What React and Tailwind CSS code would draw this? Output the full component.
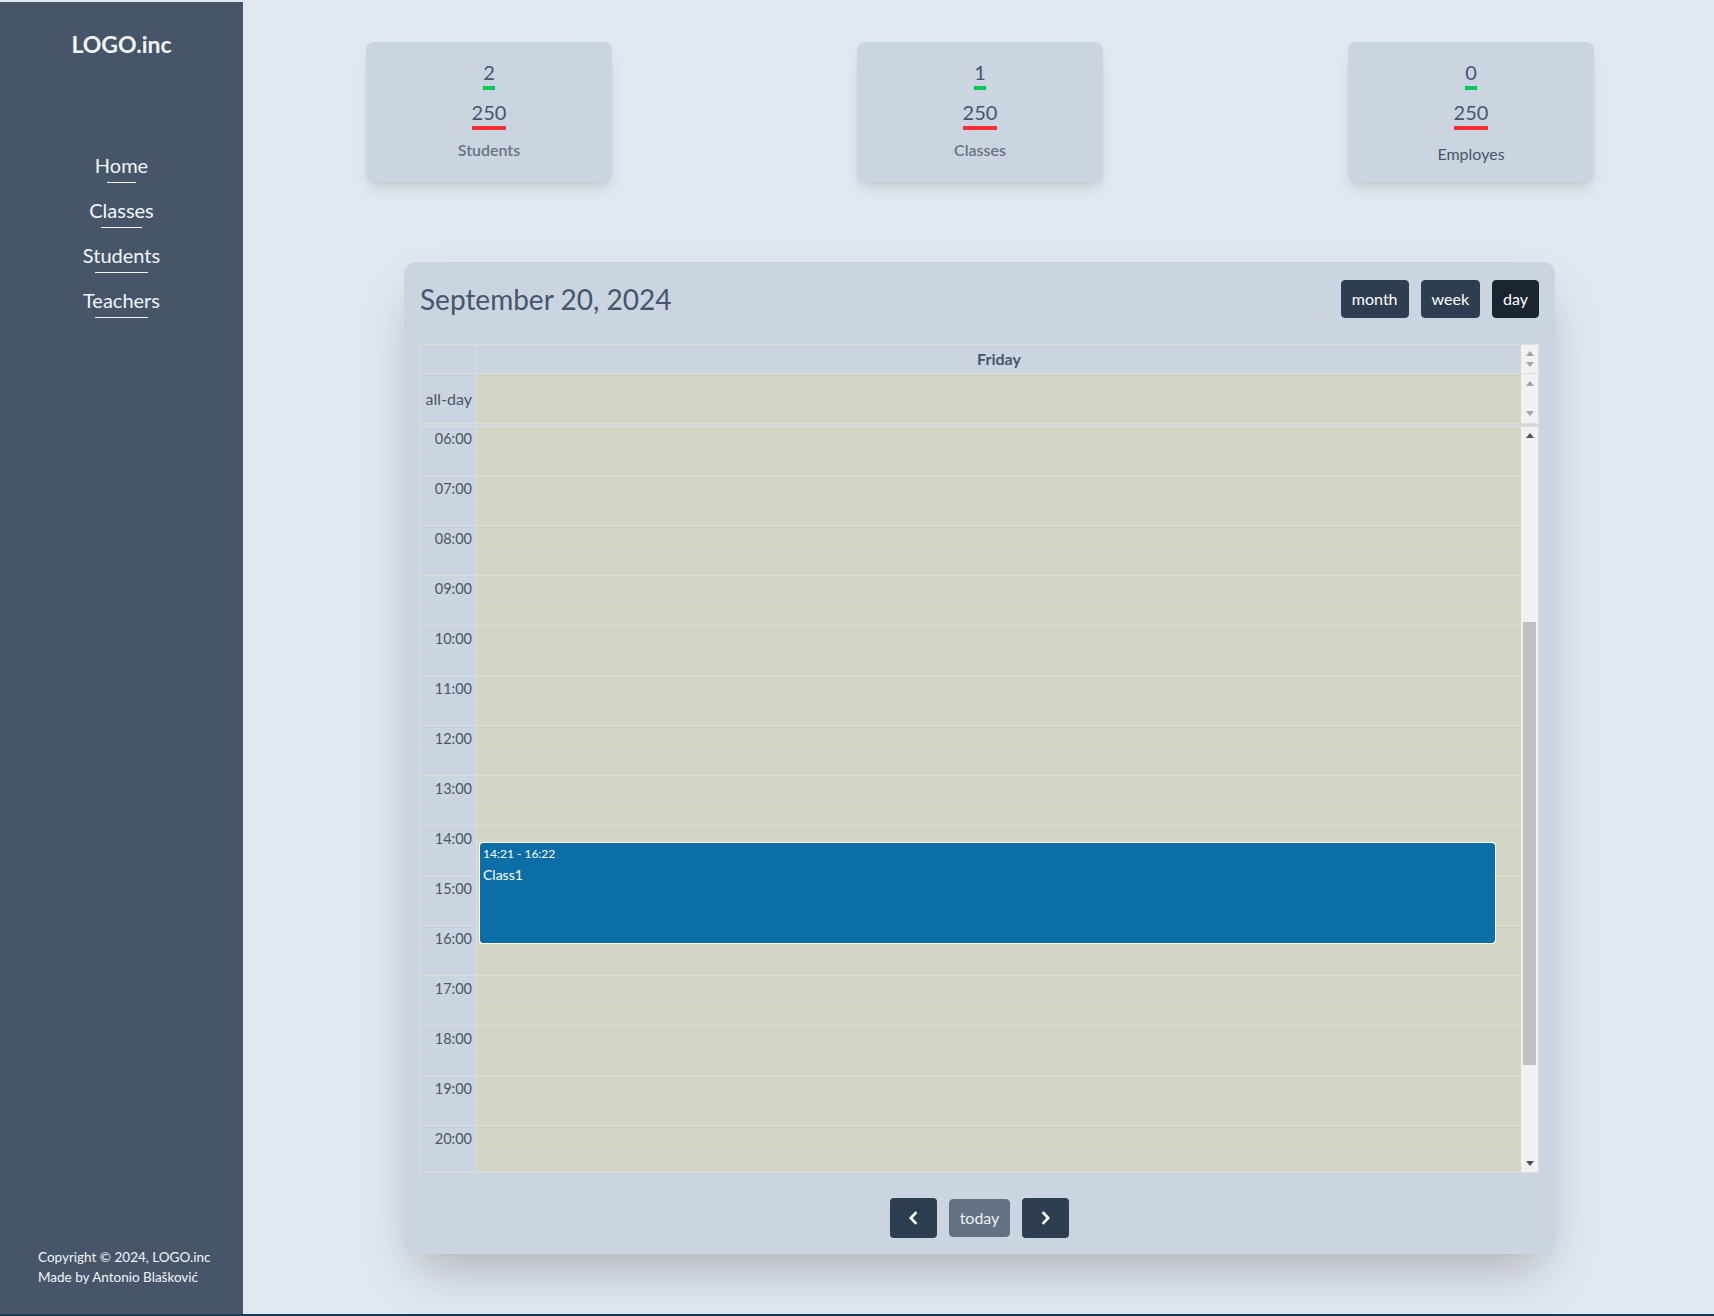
import React from 'react';

const navLinks = ['Home', 'Classes', 'Students', 'Teachers'];

const stats = [
    { value: 2, total: 250, label: 'Students', bold: true },
    { value: 1, total: 250, label: 'Classes', bold: true },
    { value: 0, total: 250, label: 'Employes', bold: false },
];

const HOUR_PX = 50;
const DAY_START = 6;
const hours = Array.from({ length: 15 }, (_, i) => i + DAY_START);

const events = [{ id: 1, start: '14:21', end: '16:22', title: 'Class1' }];

const pad = (n) => String(n).padStart(2, '0');

const toOffset = (time) => {
    const [h, m] = time.split(':').map(Number);
    return (h - DAY_START + m / 60) * HOUR_PX;
};

function Arrow({ up, dark }) {
    return (
        <svg width="8" height="5" viewBox="0 0 8 5" className={dark ? 'text-[#505050]' : 'text-[#a3a3a3]'}>
            {up ? <polygon points="0,5 8,5 4,0" fill="currentColor" /> : <polygon points="0,0 8,0 4,5" fill="currentColor" />}
        </svg>
    );
}

function Sidebar() {
    return (
        <aside className="w-[243px] shrink-0 bg-[#475569] flex flex-col items-center text-slate-100">
            <div className="pt-[26px] text-[23px] leading-8 font-bold">LOGO.inc</div>

            <nav className="mt-[91px] flex flex-col items-center gap-[13px]">
                {navLinks.map((link) => (
                    <a key={link} href="#" className="flex flex-col items-stretch text-xl leading-7">
                        <span>{link}</span>
                        <span className="mx-3 mt-[3px] h-px bg-slate-100"></span>
                    </a>
                ))}
            </nav>

            <div className="mt-auto self-start pl-[38px] pb-[27px] text-[13.5px] leading-5 text-left">
                <p>Copyright © 2024, LOGO.inc</p>
                <p>Made by Antonio Blašković</p>
            </div>
        </aside>
    );
}

function StatCard({ value, total, label, bold }) {
    return (
        <div className="w-[246px] h-[140px] bg-[#cbd5e1] rounded-lg shadow-lg flex flex-col items-center pt-[16px] text-slate-600">
            <span className="text-xl leading-7 border-b-4 border-green-500">{value}</span>
            <span className="mt-2 text-xl leading-7 border-b-4 border-red-500">{total}</span>
            {bold ? (
                <span className="mt-2 text-base leading-6 font-semibold text-gray-500">{label}</span>
            ) : (
                <span className="mt-3 text-base leading-6 text-gray-600">{label}</span>
            )}
        </div>
    );
}

function Calendar() {
    return (
        <div className="w-[1151px] mx-auto bg-[#cbd5e1] rounded-xl shadow-2xl px-4 pt-[18px] pb-4">
            {/* Toolbar */}
            <div className="flex items-center justify-between h-[38px] mb-[26px]">
                <h2 className="text-[28px] text-slate-600 leading-[38px]">September 20, 2024</h2>
                <div className="flex gap-3">
                    <button className="px-[10px] py-[6px] leading-6 rounded bg-[#2c3e50] border border-[#2c3e50] text-white">month</button>
                    <button className="px-[10px] py-[6px] leading-6 rounded bg-[#2c3e50] border border-[#2c3e50] text-white">week</button>
                    <button className="px-[10px] py-[6px] leading-6 rounded bg-[#1a252f] border border-[#1a252f] text-white">day</button>
                </div>
            </div>

            {/* Grid */}
            <div className="border border-[#ddd]">
                {/* header */}
                <div className="flex h-[29px] border-b border-[#ddd]">
                    <div className="w-[56px] border-r border-[#ddd]"></div>
                    <div className="flex-1 flex items-center justify-center font-bold text-slate-600">Friday</div>
                    <div className="w-[17px] bg-[#f1f1f1] flex flex-col items-center justify-between py-[6px]">
                        <Arrow up />
                        <Arrow />
                    </div>
                </div>

                {/* all-day */}
                <div className="flex h-[50px] border-b border-[#ddd]">
                    <div className="w-[56px] border-r border-[#ddd] flex items-center justify-end pr-1 text-base text-gray-600">all-day</div>
                    <div className="flex-1 bg-[#d3d6c5]"></div>
                    <div className="w-[17px] bg-[#f1f1f1] flex flex-col items-center justify-between pt-[7px] pb-[7px]">
                        <Arrow up />
                        <Arrow />
                    </div>
                </div>

                {/* divider */}
                <div className="h-[3px] bg-[#d1d5dc] border-b border-[#ddd]"></div>

                {/* time grid */}
                <div className="flex h-[745px] overflow-hidden">
                    <div className="relative flex-1 overflow-hidden">
                        <div className="relative -mt-[2px]">
                            {hours.map((h) => (
                                <React.Fragment key={h}>
                                    <div className="flex h-[25px] border-t border-[#ddd]">
                                        <div className="w-[56px] border-r border-[#ddd] flex items-center justify-end pr-1 pt-px text-[14.5px] text-gray-600">
                                            {pad(h)}:00
                                        </div>
                                        <div className="flex-1 bg-[#d3d6c5]"></div>
                                    </div>
                                    <div className="flex h-[25px] border-t border-dotted border-[#ddd]">
                                        <div className="w-[56px] border-r border-solid border-[#ddd]"></div>
                                        <div className="flex-1 bg-[#d3d6c5]"></div>
                                    </div>
                                </React.Fragment>
                            ))}

                            {/* events layer */}
                            <div className="absolute inset-y-0 left-[56px] right-0">
                                {events.map((ev) => {
                                    const top = toOffset(ev.start);
                                    const height = toOffset(ev.end) - top;
                                    return (
                                        <div
                                            key={ev.id}
                                            className="absolute left-[3px] right-[2.5%] bg-[#0b6ea6] border border-[#0b6ea6] rounded-[3px] ring-1 ring-white text-white px-[2px] pt-[2px]"
                                            style={{ top, height }}
                                        >
                                            <div className="text-[12px] leading-4">{ev.start} - {ev.end}</div>
                                            <div className="mt-[3px] text-[14px] leading-5">{ev.title}</div>
                                        </div>
                                    );
                                })}
                            </div>
                        </div>
                    </div>

                    {/* scrollbar */}
                    <div className="w-[17px] bg-[#f1f1f1] flex flex-col items-center">
                        <div className="h-[17px] flex items-center justify-center">
                            <Arrow up dark />
                        </div>
                        <div className="flex-1 w-full px-[2px] pt-[178px] pb-[90px]">
                            <div className="h-full bg-[#c1c1c1]"></div>
                        </div>
                        <div className="h-[17px] flex items-center justify-center">
                            <Arrow dark />
                        </div>
                    </div>
                </div>
            </div>

            {/* Footer nav */}
            <div className="mt-[25px] flex items-center justify-center gap-3">
                <button className="w-[47px] h-[40px] rounded bg-[#2c3e50] flex items-center justify-center">
                    <svg width="10" height="14" viewBox="0 0 10 14" fill="none" stroke="white" strokeWidth="2.6" strokeLinecap="square">
                        <path d="M7.5 2 L2.8 7 L7.5 12" />
                    </svg>
                </button>
                <button className="px-[10px] py-[6px] leading-6 rounded bg-[#2c3e50] border border-[#2c3e50] text-white opacity-65">today</button>
                <button className="w-[47px] h-[40px] rounded bg-[#2c3e50] flex items-center justify-center">
                    <svg width="10" height="14" viewBox="0 0 10 14" fill="none" stroke="white" strokeWidth="2.6" strokeLinecap="square">
                        <path d="M2.5 2 L7.2 7 L2.5 12" />
                    </svg>
                </button>
            </div>
        </div>
    );
}

export default function App() {
    return (
        <div className="h-[1316px] flex flex-col bg-[#e2e8f0] pt-[2px] font-[family-name:Lato,sans-serif] overflow-hidden">
            <div className="flex flex-1 min-h-0">
                <Sidebar />
                <main className="flex-1 flex flex-col">
                    <div className="pt-10 pl-[3px] flex justify-center gap-[245px]">
                        {stats.map((s) => (
                            <StatCard key={s.label} {...s} />
                        ))}
                    </div>
                    <div className="mt-20 pl-[2px]">
                        <Calendar />
                    </div>
                </main>
            </div>
            <div className="h-[2px] bg-[#173b57]"></div>
        </div>
    );
}
